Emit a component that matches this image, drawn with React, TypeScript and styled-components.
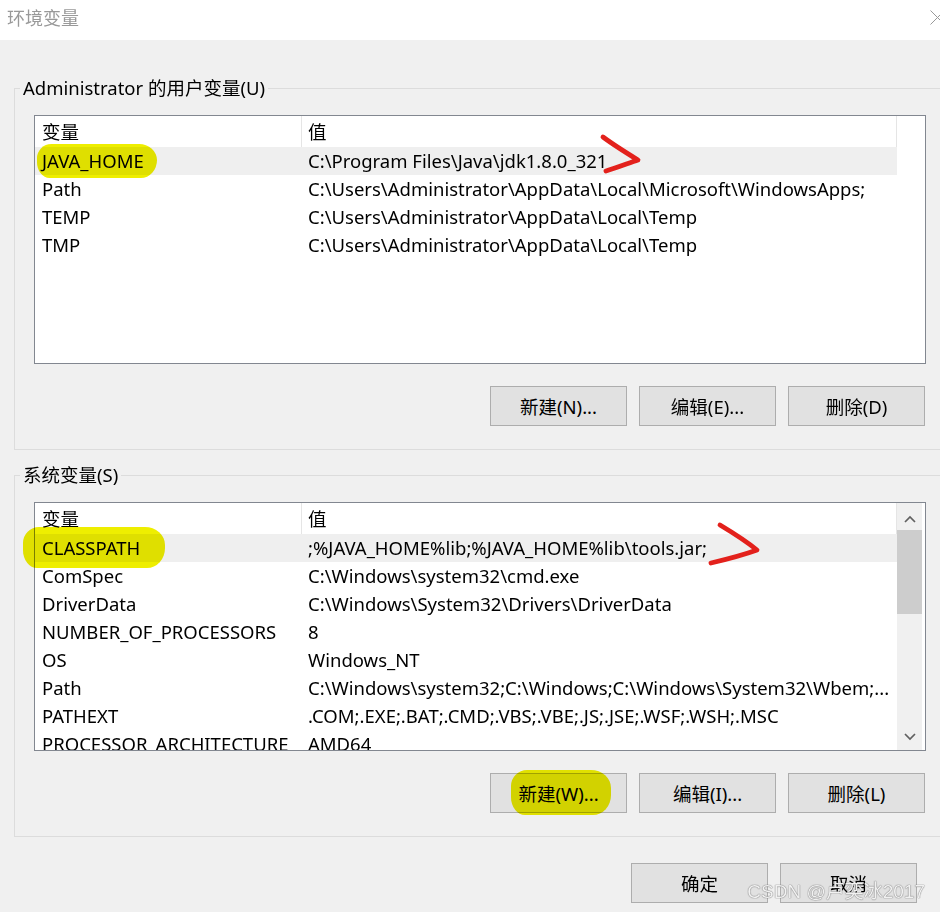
import React from "react";
import styled, { createGlobalStyle } from "styled-components";

const Global = createGlobalStyle`
  html, body { margin: 0; padding: 0; background: #f0f0f0; overflow: hidden; }
  #root { width: 940px; height: 912px; overflow: hidden; }
`;

const FONT = `"Noto Sans", "Noto Sans CJK SC", sans-serif`;

const Window = styled.div`
  width: 940px;
  height: 912px;
  display: flex;
  flex-direction: column;
  background: #f0f0f0;
  font-family: ${FONT};
  font-size: 18.5px;
  color: #000;
  overflow: hidden;
`;

const TitleBar = styled.div`
  height: 40px;
  flex: none;
  background: #fff;
  display: flex;
  align-items: flex-start;
  padding-left: 7px;
  margin-right: -5px;
`;

const Title = styled.div`
  margin-top: 6px;
  line-height: 24px;
  font-size: 18px;
  color: #999;
`;

const CloseIcon = styled.svg`
  margin-left: auto;
  margin-top: 10px;
  width: 15px;
  height: 15px;
`;

const Body = styled.div`
  flex: none;
  padding: 36px 0 0 14px;
  display: flex;
  flex-direction: column;
`;

const Group = styled.fieldset<{ $gap?: number }>`
  margin: ${(p) => p.$gap ?? 0}px 0 0 0;
  width: 931px;
  min-width: 0;
  box-sizing: border-box;
  border: 1px solid #dcdcdc;
  padding: 15px 18px 23px 19px;
`;

const Legend = styled.legend`
  margin-left: -14px;
  padding: 0 3px;
  line-height: 24px;
`;

const ListBox = styled.div`
  position: relative;
  height: 249px;
  box-sizing: border-box;
  border: 1px solid #828790;
  background: #fff;
  display: flex;
`;

const ListMain = styled.div`
  width: 862px;
  flex: none;
  display: flex;
  flex-direction: column;
  overflow: hidden;
`;

const HeaderRow = styled.div`
  display: grid;
  grid-template-columns: 267px 595px;
  height: 31px;
  flex: none;
`;

const HeaderCell = styled.div<{ $pad: number }>`
  border-right: 1px solid #e5e5e5;
  padding-left: ${(p) => p.$pad}px;
  line-height: 31px;
`;

const Row = styled.div<{ $selected?: boolean }>`
  display: grid;
  grid-template-columns: 267px 595px;
  height: 28px;
  line-height: 28px;
  flex: none;
  background: ${(p) => (p.$selected ? "#efefef" : "transparent")};
`;

const NameCell = styled.div`
  padding-left: 7px;
  white-space: nowrap;
  overflow: hidden;
`;

const ValueCell = styled.div`
  padding-left: 6px;
  white-space: nowrap;
`;

const MarkText = styled.span`
  position: relative;
  display: inline-block;
  line-height: 28px;
`;

const RedMark = styled.svg<{ $dx: number; $dy: number }>`
  position: absolute;
  left: calc(100% + ${(p) => p.$dx}px);
  top: ${(p) => p.$dy}px;
  overflow: visible;
  pointer-events: none;
`;

const Highlight = styled.span<{
  $top: number;
  $left: number;
  $w: number;
  $h: number;
}>`
  position: absolute;
  top: ${(p) => p.$top}px;
  left: ${(p) => p.$left}px;
  width: ${(p) => p.$w}px;
  height: ${(p) => p.$h}px;
  background: #eeee00;
  mix-blend-mode: multiply;
  border-radius: 16px 20px 18px 14px / 16px 18px 20px 18px;
  pointer-events: none;
`;

const ScrollBar = styled.div`
  width: 25px;
  flex: none;
  background: #f0f0f0;
  display: flex;
  flex-direction: column;
`;

const ScrollArrow = styled.div<{ $shift: number }>`
  height: 27px;
  flex: none;
  display: flex;
  align-items: center;
  justify-content: center;
  padding-top: ${(p) => p.$shift}px;
  box-sizing: border-box;
`;

const ScrollTrack = styled.div`
  flex: 1;
`;

const Thumb = styled.div`
  height: 84px;
  background: #cdcdcd;
`;

const ButtonRow = styled.div`
  display: flex;
  justify-content: flex-end;
  gap: 12px;
  margin-top: 22px;
  width: 891px;
`;

const Button = styled.button`
  position: relative;
  overflow: visible;
  width: 137px;
  height: 40px;
  box-sizing: border-box;
  padding: 0;
  background: #e1e1e1;
  border: 1px solid #adadad;
  border-radius: 0;
  font: inherit;
  color: #000;
`;

const Footer = styled.div`
  position: relative;
  display: flex;
  justify-content: flex-end;
  gap: 12px;
  padding: 26px 23px 0 0;
`;

const Watermark = styled.div`
  position: absolute;
  right: 15px;
  top: 44px;
  font-family: "Liberation Sans", "Noto Sans CJK SC", sans-serif;
  font-size: 19px;
  line-height: 22px;
  color: rgba(255, 255, 255, 0.9);
  text-shadow: 0 0 1px #6f6f6f, 0 0 1px #6f6f6f;
  pointer-events: none;
`;

type Mark = { d: string; w: number; h: number; dx: number; dy: number };
type Item = { name: string; value: string; selected?: boolean; mark?: Mark };

const userVars: Item[] = [
  {
    name: "JAVA_HOME",
    value: "C:\\Program Files\\Java\\jdk1.8.0_321",
    selected: true,
    mark: {
      d: "M2 4 C 10 10, 24 19, 37 27 C 28 30, 15 35, 5 38",
      w: 42,
      h: 42,
      dx: -6,
      dy: -14,
    },
  },
  {
    name: "Path",
    value: "C:\\Users\\Administrator\\AppData\\Local\\Microsoft\\WindowsApps;",
  },
  { name: "TEMP", value: "C:\\Users\\Administrator\\AppData\\Local\\Temp" },
  { name: "TMP", value: "C:\\Users\\Administrator\\AppData\\Local\\Temp" },
];

const sysVars: Item[] = [
  {
    name: "CLASSPATH",
    value: ";%JAVA_HOME%lib;%JAVA_HOME%lib\\tools.jar;",
    selected: true,
    mark: {
      d: "M12 4 C 22 10, 38 20, 49 29 C 38 33, 20 38, 3 42",
      w: 54,
      h: 46,
      dx: 1,
      dy: -13,
    },
  },
  { name: "ComSpec", value: "C:\\Windows\\system32\\cmd.exe" },
  { name: "DriverData", value: "C:\\Windows\\System32\\Drivers\\DriverData" },
  { name: "NUMBER_OF_PROCESSORS", value: "8" },
  { name: "OS", value: "Windows_NT" },
  {
    name: "Path",
    value: "C:\\Windows\\system32;C:\\Windows;C:\\Windows\\System32\\Wbem;...",
  },
  { name: "PATHEXT", value: ".COM;.EXE;.BAT;.CMD;.VBS;.VBE;.JS;.JSE;.WSF;.WSH;.MSC" },
  { name: "PROCESSOR_ARCHITECTURE", value: "AMD64" },
  { name: "PROCESSOR_IDENTIFIER", value: "Intel64 Family 6 Model 140 Stepping 1, GenuineIntel" },
  { name: "PROCESSOR_LEVEL", value: "6" },
];

function Chevron({ up }: { up?: boolean }) {
  return (
    <svg width="12" height="8" viewBox="0 0 12 8">
      <path
        d={up ? "M1 7 L6 2 L11 7" : "M1 1 L6 6 L11 1"}
        fill="none"
        stroke="#606060"
        strokeWidth="1.7"
      />
    </svg>
  );
}

function VarList({
  items,
  scroll,
  hl,
}: {
  items: Item[];
  scroll?: boolean;
  hl: { top: number; left: number; w: number; h: number };
}) {
  return (
    <ListBox>
      <ListMain>
        <HeaderRow>
          <HeaderCell $pad={7}>变量</HeaderCell>
          <HeaderCell $pad={6}>值</HeaderCell>
        </HeaderRow>
        {items.map((it, i) => (
          <Row key={i} $selected={it.selected}>
            <NameCell>{it.name}</NameCell>
            <ValueCell>
              {it.mark ? (
                <MarkText>
                  {it.value}
                  <RedMark
                    $dx={it.mark.dx}
                    $dy={it.mark.dy}
                    width={it.mark.w}
                    height={it.mark.h}
                    viewBox={`0 0 ${it.mark.w} ${it.mark.h}`}
                  >
                    <path
                      d={it.mark.d}
                      fill="none"
                      stroke="#e3211c"
                      strokeWidth="4.8"
                      strokeLinecap="round"
                      strokeLinejoin="round"
                    />
                  </RedMark>
                </MarkText>
              ) : (
                it.value
              )}
            </ValueCell>
          </Row>
        ))}
      </ListMain>
      {scroll && (
        <ScrollBar>
          <ScrollArrow $shift={5}>
            <Chevron up />
          </ScrollArrow>
          <ScrollTrack>
            <Thumb />
          </ScrollTrack>
          <ScrollArrow $shift={0}>
            <Chevron />
          </ScrollArrow>
        </ScrollBar>
      )}
      <Highlight $top={hl.top} $left={hl.left} $w={hl.w} $h={hl.h} />
    </ListBox>
  );
}

export default function App() {
  return (
    <>
      <Global />
      <Window>
        <TitleBar>
          <Title>环境变量</Title>
          <CloseIcon viewBox="0 0 15 15">
            <path d="M0.5 0.5 L14.5 14.5 M14.5 0.5 L0.5 14.5" stroke="#999" strokeWidth="1" />
          </CloseIcon>
        </TitleBar>
        <Body>
          <Group>
            <Legend>Administrator 的用户变量(U)</Legend>
            <VarList items={userVars} hl={{ top: 28, left: 2, w: 120, h: 34 }} />
            <ButtonRow>
              <Button>新建(N)...</Button>
              <Button>编辑(E)...</Button>
              <Button>删除(D)</Button>
            </ButtonRow>
          </Group>
          <Group $gap={13}>
            <Legend>系统变量(S)</Legend>
            <VarList items={sysVars} scroll hl={{ top: 24, left: -12, w: 142, h: 41 }} />
            <ButtonRow>
              <Button>
                新建(W)...
                <Highlight $top={-4} $left={20} $w={100} $h={45} />
              </Button>
              <Button>编辑(I)...</Button>
              <Button>删除(L)</Button>
            </ButtonRow>
          </Group>
        </Body>
        <Footer>
          <Button>确定</Button>
          <Button>取消</Button>
          <Watermark>CSDN @卢奕冰2017</Watermark>
        </Footer>
      </Window>
    </>
  );
}
